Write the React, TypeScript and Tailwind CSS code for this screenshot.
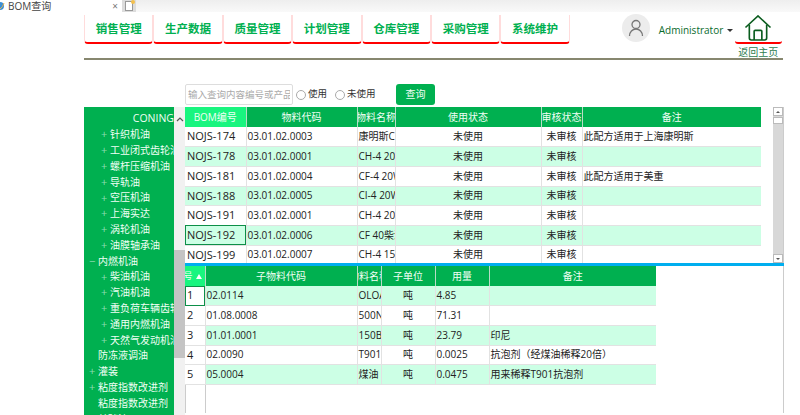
import React from "react";

const nav = ["销售管理", "生产数据", "质量管理", "计划管理", "仓库管理", "采购管理", "系统维护"];
const tree: [number, string, string][] = [
  [0, "", "CONING"],
  [2, "+", "针织机油"],
  [2, "+", "工业闭式齿轮油"],
  [2, "+", "螺杆压缩机油"],
  [2, "+", "导轨油"],
  [2, "+", "空压机油"],
  [2, "+", "上海实达"],
  [2, "+", "涡轮机油"],
  [2, "+", "油膜轴承油"],
  [1, "−", "内燃机油"],
  [2, "+", "柴油机油"],
  [2, "+", "汽油机油"],
  [2, "+", "重负荷车辆齿轮油"],
  [2, "+", "通用内燃机油"],
  [2, "+", "天然气发动机油"],
  [1, "", "防冻液调油"],
  [1, "+", "灌装"],
  [1, "+", "粘度指数改进剂"],
  [1, "", "粘度指数改进剂"],
  [1, "+", "基础油"],
];
const topRows = [
  ["NOJS-174", "03.01.02.0003", "康明斯CI-4", "未使用", "未审核", "此配方适用于上海康明斯"],
  ["NOJS-178", "03.01.02.0001", "CH-4 20W", "未使用", "未审核", ""],
  ["NOJS-181", "03.01.02.0004", "CF-4 20W", "未使用", "未审核", "此配方适用于美重"],
  ["NOJS-188", "03.01.02.0005", "CI-4 20W", "未使用", "未审核", ""],
  ["NOJS-191", "03.01.02.0001", "CH-4 20W", "未使用", "未审核", ""],
  ["NOJS-192", "03.01.02.0006", "CF 40柴油", "未使用", "未审核", ""],
  ["NOJS-199", "03.01.02.0007", "CH-4 15W", "未使用", "未审核", ""],
];
const subRows = [
  ["1", "02.0114", "OLOA", "吨", "4.85", ""],
  ["2", "01.08.0008", "500N", "吨", "71.31", ""],
  ["3", "01.01.0001", "150BS", "吨", "23.79", "印尼"],
  ["4", "02.0090", "T901", "吨", "0.0025", "抗泡剂（经煤油稀释20倍）"],
  ["5", "05.0004", "煤油", "吨", "0.0475", "用来稀释T901抗泡剂"],
];
const font = { fontFamily: '"Open Sans","Noto Sans CJK SC",sans-serif' };

function Grid({ widths, heads, rows, sub }: { widths: number[]; heads: React.ReactNode[]; rows: string[][]; sub?: boolean }) {
  const center = sub ? [3] : [3, 4];
  return (
    <table className="table-fixed border-collapse text-[10px] text-[#222]" style={{ width: widths.reduce((a, b) => a + b, 0) }}>
      <colgroup>
        {widths.map((w, i) => (
          <col key={i} style={{ width: w }} />
        ))}
      </colgroup>
      <thead>
        <tr className="h-[20px] bg-[#00b050] text-[#f0fff5]">
          {heads.map((h, i) => (
            <th
              key={i}
              className={`overflow-hidden whitespace-nowrap border-r border-[#b8dcc6] p-0 text-center text-[10px] font-normal last:border-r-0 ${i === 0 ? "bg-[#19f57f]" : ""}`}
            >
              {typeof h === "string" ? (
                <div className="flex justify-center">
                  <span className="shrink-0">{h}</span>
                </div>
              ) : (
                h
              )}
            </th>
          ))}
        </tr>
      </thead>
      <tbody>
        {rows.map((r, ri) => {
          const green = sub ? ri % 2 === 0 : ri % 2 === 1;
          return (
            <tr key={ri} className={`h-[19.7px] ${green ? "bg-[#ccffe5]" : "bg-white"}`}>
              {r.map((c, ci) => {
                const active = (!sub && ri === 5 && ci === 0) || (sub && ri === 0 && ci === 0);
                const white = sub && ci === 0;
                const big = ci === 0 ? "text-[11px] px-[2px]" : "px-[1px]";
                return (
                  <td
                    key={ci}
                    className={`overflow-hidden whitespace-nowrap border-b border-r border-[#e2e2e2] py-0 last:border-r-0 ${big} ${center.includes(ci) ? "text-center" : "text-left"} ${white ? "bg-white" : ""} ${active ? "outline outline-1 -outline-offset-1 outline-[#0c8f48]" : ""}`}
                  >
                    {c}
                  </td>
                );
              })}
            </tr>
          );
        })}
      </tbody>
    </table>
  );
}

export default function App() {
  return (
    <div className="flex h-[415px] w-[800px] flex-col overflow-hidden bg-white" style={font}>
      {/* tab strip */}
      <div className="flex h-[12px] items-center">
        <div className="flex w-[122px] items-center text-[10px] text-[#444]">
          <svg width="8" height="10" viewBox="0 0 8 10" className="shrink-0">
            <circle cx="0" cy="5" r="4" fill="#3c8fd6" />
            <path d="M0 8 Q3 6 4 2" stroke="#e9b44c" fill="none" />
          </svg>
          <span className="flex-1">BOM查询</span>
          <span className="mr-[4px] text-[10px] text-[#777]">×</span>
        </div>
        <div className="relative flex h-[12px] w-[14px] items-center justify-center bg-[#dcdcdc]">
          <div className="h-[10px] w-[8px] border border-[#999] bg-white" />
          <div className="absolute right-[1px] top-0 h-[4px] w-[4px] rounded-full bg-[#f4c04c]" />
        </div>
        <div className="h-[12px] flex-1 bg-gradient-to-b from-[#eeeeee] to-[#f9f9f9]" />
      </div>

      {/* header */}
      <div className="ml-[84px] mr-[17px] flex h-[48px] flex-col border-b-2 border-[#87876f]">
        <div className="flex h-[46px] items-start">
          <div className="mt-[3px] flex">
            {nav.map((n) => (
              <div
                key={n}
                className="flex h-[29px] w-[69.4px] items-center justify-center rounded-b-[4px] border-x border-b-2 border-x-[#ffdcdc] border-b-[#ff0000] text-[11.5px] font-bold text-[#00b050]"
              >
                {n}
              </div>
            ))}
          </div>
          <div className="ml-[52px] mt-[2px] flex h-[28px] w-[28px] shrink-0 items-center justify-center rounded-full bg-[#ececec]">
            <svg width="16" height="18" viewBox="0 0 16 18" fill="none" stroke="#777" strokeWidth="1.3">
              <circle cx="8" cy="5.500" r="4" />
              <path d="M1.500 17c0-4 3-7 6.500-7s6.500 3 6.500 7" />
            </svg>
          </div>
          <span className="ml-[9px] mt-[10px] w-[63px] whitespace-nowrap text-[10px] leading-[16px] text-[#0b6b2c]">Administrator</span>
          <span className="ml-[5px] mt-[17px] h-0 w-0 border-x-[3px] border-t-[3px] border-x-transparent border-t-[#333]" />
          <div className="ml-[2px] flex h-[60px] w-[47px] shrink-0 flex-col items-center">
            <svg width="28" height="26" viewBox="0 0 28 27" fill="none" stroke="#0a5c1e" strokeWidth="1.7" className="mt-[3px] shrink-0">
              <path d="M1 13 L14 1 L27 13" />
              <path d="M5 10 V24 a2 2 0 0 0 2 2 H21 a2 2 0 0 0 2 -2 V10" />
              <path d="M10 26 V17 a1 1 0 0 1 1-1 H17 a1 1 0 0 1 1 1 V26" />
            </svg>
            <div className="h-[3px] w-[47px] shrink-0 rounded-b-[3px] border-b-2 border-b-[#ff0000]" />
            <span className="mt-[2px] whitespace-nowrap text-[10px] leading-[12px] text-[#2f7d4f]">返回主页</span>
          </div>
        </div>
      </div>

      {/* search */}
      <div className="ml-[185px] mt-[24px] flex h-[21px] items-center text-[9.5px] text-[#333]">
        <input
          readOnly
          placeholder="输入查询内容编号或产品"
          className="h-[21px] w-[108px] rounded-[2px] border border-[#ddd] px-[2px] text-[9.5px] placeholder:text-[#aaa]"
        />
        <span className="ml-[3px] h-[10px] w-[10px] rounded-full border border-[#aaa]" />
        <span className="ml-[2px] w-[19px]">使用</span>
        <span className="ml-[8px] h-[10px] w-[10px] rounded-full border border-[#aaa]" />
        <span className="ml-[2px] w-[29px]">未使用</span>
        <button className="ml-[20px] h-[21px] w-[39px] rounded-[3px] bg-[#00b050] text-[10px] text-[#f0fff5]">查询</button>
      </div>

      {/* body */}
      <div className="ml-[84px] mt-[2px] flex min-h-0 flex-1">
        <div className="h-[308px] w-[90px] shrink-0 overflow-hidden bg-[#00b050] pt-[4px] text-[10px] text-[#f0fff5]">
          {tree.map(([lvl, sign, label], i) => (
            <div key={i} className={`flex h-[15.8px] items-center whitespace-nowrap ${lvl === 0 ? "justify-end text-[10.5px]" : lvl === 1 ? "pl-[5px]" : "pl-[17px]"}`}>
              {lvl > 0 && <span className="w-[9px] shrink-0 text-[11px] text-[#8fdcb0]">{sign}</span>}
              <span>{label}</span>
            </div>
          ))}
        </div>
        <div className="flex h-[308px] w-[11px] shrink-0 flex-col items-center bg-[#f1f1f1] pt-[10px]">
          <svg width="8" height="5" viewBox="0 0 8 5" fill="none" stroke="#555" strokeWidth="1.2" className="shrink-0">
            <path d="M1 4 L4 1 L7 4" />
          </svg>
          <div className="mt-[128px] h-[108px] w-full shrink-0 bg-[#c4c4c4]" />
        </div>
        <div className="flex w-[599px] shrink-0 flex-col">
          <div className="flex h-[156px] overflow-hidden border-r border-[#ccc]">
            <div className="w-[576px] shrink-0">
              <Grid
                widths={[61, 111, 38, 146, 41, 179]}
                heads={["BOM编号", "物料代码", "物料名称", "使用状态", "审核状态", "备注"]}
                rows={topRows}
              />
            </div>
            <div className="ml-[12px] flex w-[10px] flex-col items-center bg-[#d8d8d8]">
              <div className="flex h-[9px] w-full items-center justify-center border border-[#bbb] bg-white">
                <span className="h-0 w-0 border-x-[2px] border-b-[2px] border-x-transparent border-b-[#555]" />
              </div>
              <div className="mt-[1px] h-[7px] w-full border border-[#bbb] bg-white" />
              <div className="flex-1" />
              <div className="flex h-[9px] w-full items-center justify-center border border-[#bbb] bg-white">
                <span className="h-0 w-0 border-x-[2px] border-t-[2px] border-x-transparent border-t-[#555]" />
              </div>
            </div>
          </div>
          <div className="h-[3px] bg-[#00aeef]" />
          <div className="flex h-[147px] flex-col border-r border-[#ccc]">
            <Grid
              sub
              widths={[20, 152, 24, 54, 54, 167]}
              heads={[
                <div className="flex items-center justify-end pr-[3px]">
                  <span className="shrink-0 text-[9px]">序号</span>
                  <span className="ml-[3px] h-0 w-0 shrink-0 border-x-[3px] border-b-[5px] border-x-transparent border-b-white" />
                </div>,
                "子物料代码",
                "物料名称",
                "子单位",
                "用量",
                "备注",
              ]}
              rows={subRows}
            />
            <div className="w-[21px] flex-1 border-x border-[#ccc]" />
          </div>
        </div>
      </div>
    </div>
  );
}
